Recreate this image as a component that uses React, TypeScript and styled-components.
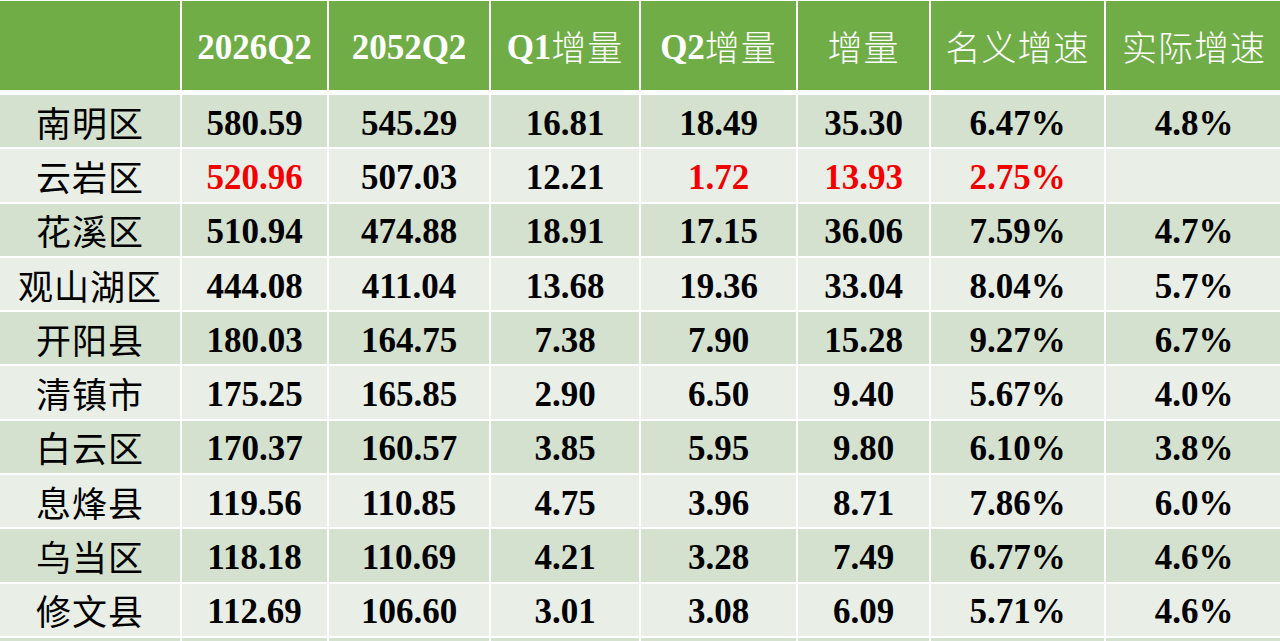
import React from 'react';
import styled, { createGlobalStyle } from 'styled-components';

const GlobalStyle = createGlobalStyle`
	html, body {
		margin: 0;
		padding: 0;
		background: #fff;
		overflow: hidden;
	}
	#root {
		height: 641px;
		overflow: hidden;
	}
`;

interface IRow {
	name: string;
	values: string[];
	red?: number[];
}

const rows: IRow[] = [
	{ name: '南明区', values: ['580.59', '545.29', '16.81', '18.49', '35.30', '6.47%', '4.8%'] },
	{ name: '云岩区', values: ['520.96', '507.03', '12.21', '1.72', '13.93', '2.75%', ''], red: [0, 3, 4, 5] },
	{ name: '花溪区', values: ['510.94', '474.88', '18.91', '17.15', '36.06', '7.59%', '4.7%'] },
	{ name: '观山湖区', values: ['444.08', '411.04', '13.68', '19.36', '33.04', '8.04%', '5.7%'] },
	{ name: '开阳县', values: ['180.03', '164.75', '7.38', '7.90', '15.28', '9.27%', '6.7%'] },
	{ name: '清镇市', values: ['175.25', '165.85', '2.90', '6.50', '9.40', '5.67%', '4.0%'] },
	{ name: '白云区', values: ['170.37', '160.57', '3.85', '5.95', '9.80', '6.10%', '3.8%'] },
	{ name: '息烽县', values: ['119.56', '110.85', '4.75', '3.96', '8.71', '7.86%', '6.0%'] },
	{ name: '乌当区', values: ['118.18', '110.69', '4.21', '3.28', '7.49', '6.77%', '4.6%'] },
	{ name: '修文县', values: ['112.69', '106.60', '3.01', '3.08', '6.09', '5.71%', '4.6%'] },
	{ name: '', values: ['', '', '', '', '', '', ''] },
];

const App = () => {
	return (
		<>
			<GlobalStyle />
			<Table>
				<HeadCell />
				<HeadCell>
					<Latin>2026Q2</Latin>
				</HeadCell>
				<HeadCell>
					<Latin>2052Q2</Latin>
				</HeadCell>
				<HeadCell>
					<Latin>Q1</Latin>
					<Han>增量</Han>
				</HeadCell>
				<HeadCell>
					<Latin>Q2</Latin>
					<Han>增量</Han>
				</HeadCell>
				<HeadCell>
					<Han>增量</Han>
				</HeadCell>
				<HeadCell>
					<Han>名义增速</Han>
				</HeadCell>
				<HeadCell>
					<Han>实际增速</Han>
				</HeadCell>
				{rows.map((row, i) => (
					<React.Fragment key={i}>
						<NameCell $odd={i % 2 === 0}>{row.name}</NameCell>
						{row.values.map((v, j) => (
							<Cell key={j} $odd={i % 2 === 0} $red={row.red?.includes(j)}>
								{v}
							</Cell>
						))}
					</React.Fragment>
				))}
			</Table>
		</>
	);
};

const Table = styled.div`
	display: grid;
	grid-template-columns: 180px 145px 160px 148px 155px 131px 173px 1fr;
	grid-template-rows: 92px;
	grid-auto-rows: 52.3px;
	column-gap: 2px;
	row-gap: 2px;
	padding-top: 1px;
	background: #fff;
	width: 1282px;
`;

const HeadCell = styled.div`
	display: flex;
	align-items: center;
	justify-content: center;
	background: #70ad47;
	color: #fff;
	margin-bottom: 3px;
`;

const Latin = styled.span`
	font-family: 'Liberation Serif', serif;
	font-weight: 700;
	font-size: 35px;
	padding-top: 5px;
`;

const Han = styled.span`
	font-family: 'Noto Sans CJK SC', sans-serif;
	font-weight: 300;
	font-size: 35px;
	letter-spacing: 1px;
`;

const Cell = styled.div<{ $odd: boolean; $red?: boolean }>`
	display: flex;
	align-items: center;
	justify-content: center;
	padding-top: 5px;
	background: ${p => (p.$odd ? '#d4e1ce' : '#e9eee7')};
	color: ${p => (p.$red ? '#f20000' : '#000')};
	font-family: 'Liberation Serif', serif;
	font-weight: 700;
	font-size: 35px;
`;

const NameCell = styled(Cell)`
	padding-top: 0;
	font-family: 'Noto Sans CJK SC', sans-serif;
	font-weight: 400;
	font-size: 35px;
	letter-spacing: 1px;
`;

export default App;
